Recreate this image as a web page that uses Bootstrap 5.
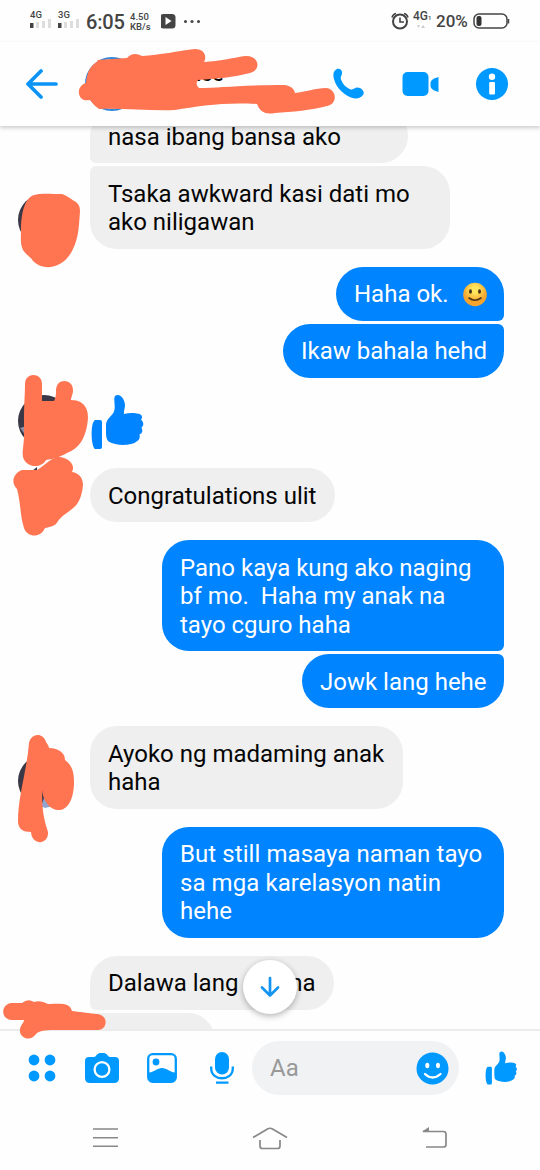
<!DOCTYPE html>
<html lang="tl">
<head>
<meta charset="utf-8">
<meta name="viewport" content="width=device-width, initial-scale=1">
<title>Chat</title>
<link href="https://cdn.jsdelivr.net/npm/bootstrap@5.3.0/dist/css/bootstrap.min.css" rel="stylesheet">
<style>
body{font-family:Roboto,"Liberation Sans",sans-serif;color:#050505;background:#fefefe}
.phone{width:540px;height:1170px}
svg{display:block;flex:none}
.statusbar{height:42px;padding:0 30px;color:#444;font-weight:500}
.sim{width:28px;font-size:9.5px;line-height:10px;padding-top:10px}
.sim svg{margin-top:-1px}
.clock{font-size:20px;line-height:44px;width:44px;letter-spacing:-.2px}
.rate{font-size:9.5px;line-height:9.5px;width:31px;padding-top:12px;font-weight:500}
.net{width:23px;margin-left:3px;padding-top:10px;font-size:12px;line-height:13px}
.net span{font-size:6px}
.level{font-size:17px;line-height:43px;width:36px}
.topbar{height:84px;z-index:2;background:#fefefe;box-shadow:0 2px 4px rgba(0,0,0,.2)}
.contact{width:202px;margin-left:26px}
.face{width:54px;height:54px;border:2px solid #2f87d8;background:#dce8f4}
.who{font-size:21px;font-weight:500;line-height:26px;padding-left:46px}
.seen{font-size:15.5px;line-height:20px;color:#777;padding-left:46px}
.chat{height:903px;padding:0 36px 0 90px}
.bubble{font-size:24px;line-height:28.5px;padding:13.75px 0 11.75px 18px;white-space:pre;border-radius:27px;flex:none}
.them{background:#efefef;align-self:flex-start}
.me{background:#0084ff;color:#fff;align-self:flex-end}
.tl{border-top-left-radius:6px}.bl{border-bottom-left-radius:6px}
.tr{border-top-right-radius:6px}.br{border-bottom-right-radius:6px}
.gap-l{margin-top:18px}.gap-s{margin-top:3px}
.jump{left:243px;top:834px;width:54px;height:54px;background:#fff;box-shadow:0 2px 6px rgba(0,0,0,.3)}
.composer{height:80px;padding-bottom:4px;border-top:2px solid #ebebeb;background:#fefefe;color:#0099ff}
.entry{width:207px;height:54px;margin-left:18px;padding:0 10px 0 18px;background:#f1f2f4;font-size:24px;color:#999}
.navkeys{height:61px;padding:0 92px 3px}
</style>
</head>
<body>
<div class="phone position-relative overflow-hidden d-flex flex-column">

<div class="statusbar d-flex flex-shrink-0">
  <div class="sim">4G
    <svg width="22" height="10" viewBox="0 0 22 10"><path fill="#444" d="M0 4h3.500v5H0z"/><path fill="#ddd" d="M6 3h3v6H6zM12 2h3v7h-3zM18 0h3v9h-3z"/></svg>
  </div>
  <div class="sim">3G
    <svg width="22" height="10" viewBox="0 0 22 10"><path fill="#444" d="M0 4h3.500v5H0z"/><path fill="#ddd" d="M6 3h3v6H6zM12 2h3v7h-3zM18 0h3v9h-3z"/></svg>
  </div>
  <div class="clock">6:05</div>
  <div class="rate">4.50<br>KB/s</div>
  <svg width="42" height="42" viewBox="0 0 42 42"><rect x="-1" y="14" width="15.500" height="14.500" rx="3.500" fill="#444"/><path d="M4.500 17v8l6-4z" fill="#fff"/><g fill="#444"><circle cx="24.500" cy="21.500" r="1.500"/><circle cx="31" cy="21.500" r="1.500"/><circle cx="37.500" cy="21.500" r="1.500"/></g></svg>
  <svg class="ms-auto" width="20" height="42" viewBox="0 0 20 42" fill="none" stroke="#444" stroke-width="2"><circle cx="10" cy="21.500" r="7"/><path d="M10 17.500V22h4M2 17.500q1-3.500 4-4M18 17.500q-1-3.500-4-4" stroke-width="1.600"/></svg>
  <div class="net d-flex flex-column">
    <div>4G<span>1</span></div>
    <svg width="20" height="6" viewBox="0 0 20 6"><path fill="#ccc" d="M4 1h3L5.500 4zM8 4h4L10 1z"/></svg>
  </div>
  <div class="level">20%</div>
  <svg width="38" height="42" viewBox="0 0 38 42"><rect x="2" y="14" width="33" height="14" rx="5" fill="none" stroke="#444" stroke-width="1.500"/><rect x="4.500" y="16" width="5" height="10" rx="2" fill="#333"/><path d="M36.500 19v4.500" stroke="#444" stroke-width="1.500"/></svg>
</div>

<header class="topbar position-relative d-flex align-items-center flex-shrink-0">
  <svg style="margin-left:26px" width="33" height="32" viewBox="0 0 33 32" fill="none" stroke="#0b93f6" stroke-width="3.700" stroke-linecap="round" stroke-linejoin="round"><path d="M30 16H2M15 3L2 16l13 13"/></svg>
  <div class="contact d-flex align-items-center">
    <div class="face rounded-circle flex-shrink-0"></div>
    <div class="text-nowrap" style="margin-left:11px">
      <div class="who">ice</div>
      <div class="seen">seconds</div>
    </div>
  </div>
  <svg style="margin-left:45px" width="34" height="34" viewBox="0 0 34 34"><path fill="#0099ff" d="M3 3.500C5.500.500 9.500 2 10 5c.500 3-2 4.500-1 7.500 2 5 5 8 9.500 10 3 .500 4-2 7-2 4 0 8 4.500 5.500 7.500-2.500 3-6.500 4.500-12 2.500C10 27 3 19 1.500 10 1.200 7 1.500 5 3 3.500z"/></svg>
  <svg style="margin-left:36px" width="38" height="26" viewBox="0 0 38 26" fill="#0099ff"><rect x=".5" y="1" width="26" height="24" rx="5"/><path d="M28.500 12c0-3 4-5 8-6v15c-4-1-8-3-8-6z"/></svg>
  <svg style="margin-left:36px" width="32" height="32" viewBox="0 0 32 32"><circle cx="16" cy="16" r="16" fill="#0099ff"/><circle cx="16" cy="8.700" r="3.200" fill="#fff"/><rect x="13.200" y="14" width="5.800" height="12.500" rx="1" fill="#fff"/></svg>
</header>

<main class="chat position-relative d-flex flex-column overflow-hidden flex-shrink-0">
  <div class="bubble them bl" style="width:318px;margin-top:-17px">nasa ibang bansa ako</div>
  <div class="bubble them tl gap-s" style="width:360px">Tsaka awkward kasi dati mo
ako niligawan</div>
  <div class="bubble me br gap-l d-flex" style="width:168px"><span>Haha ok.</span><svg style="margin:2px 0 0 13px" width="26" height="25" viewBox="0 0 26 25"><defs><radialGradient id="sun" cx=".5" cy=".3"><stop offset=".3" stop-color="#ffe45c"/><stop offset="1" stop-color="#f7a42c"/></radialGradient></defs><circle cx="13" cy="12.500" r="11.800" fill="url(#sun)"/><ellipse cx="8.500" cy="9.500" rx="1.500" ry="2.300" fill="#4d3516"/><ellipse cx="17.500" cy="9.500" rx="1.500" ry="2.300" fill="#4d3516"/><path d="M7 16q6 4.500 12 0" fill="none" stroke="#4d3516" stroke-width="1.600" stroke-linecap="round"/></svg></div>
  <div class="bubble me tr gap-s" style="width:221px">Ikaw bahala hehd</div>
  <svg style="margin:16.500px 0 18px" width="54" height="56" viewBox="0 0 54 56" fill="#0084ff"><use href="#thumb"/></svg>
  <div class="bubble them" style="width:245px">Congratulations ulit</div>
  <div class="bubble me br gap-l" style="width:342px">Pano kaya kung ako naging
bf mo.  Haha my anak na
tayo cguro haha</div>
  <div class="bubble me tr gap-s" style="width:202px">Jowk lang hehe</div>
  <div class="bubble them gap-l" style="width:313px">Ayoko ng madaming anak
haha</div>
  <div class="bubble me gap-l" style="width:342px;letter-spacing:.07px">But still masaya naman tayo
sa mga karelasyon natin
hehe</div>
  <div class="bubble them bl gap-l" style="width:244px">Dalawa lang ako na</div>
  <div class="bubble them tl gap-s" style="width:125px"> </div>
  <button class="jump position-absolute rounded-circle border-0 p-0 d-flex align-items-center justify-content-center" aria-label="Down">
    <svg width="20" height="22" viewBox="0 0 20 22" fill="none" stroke="#1595f2" stroke-width="2.700" stroke-linecap="round" stroke-linejoin="round"><path d="M10 2v17.500M2 11.500l8 8 8-8"/></svg>
  </button>
</main>

<footer class="composer d-flex align-items-center flex-shrink-0">
  <svg style="margin-left:28px" width="28" height="28" viewBox="0 0 28 28" fill="currentColor"><circle cx="6" cy="6" r="5.400"/><circle cx="22" cy="6" r="5.400"/><circle cx="6" cy="22" r="5.400"/><circle cx="22" cy="22" r="5.400"/></svg>
  <svg style="margin-left:29px" width="34" height="30" viewBox="0 0 34 30"><path fill="currentColor" d="M4 4h5c2 0 3-4 6-4h4c3 0 4 4 6 4h5q4 0 4 4v17q0 5-5 5H5q-5 0-5-5V8q0-4 4-4z"/><circle cx="17" cy="16.500" r="7.400" fill="none" stroke="#fff" stroke-width="2.300"/></svg>
  <svg style="margin-left:28px" width="30" height="30" viewBox="0 0 30 30"><rect x="1.200" y="1.200" width="27.600" height="27.600" rx="4.500" fill="none" stroke="currentColor" stroke-width="2.300"/><circle cx="9" cy="9" r="3.400" fill="currentColor"/><path fill="currentColor" d="M2 19.500c6-.5 8-4.500 13-4.500s7 4 13 4.500V25q0 4-4 4H6q-4 0-4-4z"/></svg>
  <svg style="margin-left:33px" width="24" height="34" viewBox="0 0 24 34" fill="none" stroke="currentColor" stroke-width="2.300"><rect x="5" y="1" width="14" height="22.500" rx="7" fill="currentColor" stroke="none"/><path d="M1.200 15.500v2c0 13 21.600 13 21.600 0v-2M6 31.700h12.500"/></svg>
  <div class="entry rounded-pill d-flex align-items-center justify-content-between"><span>Aa</span>
    <svg width="33" height="33" viewBox="0 0 33 33"><circle cx="16.500" cy="16.500" r="16" fill="#0099ff"/><ellipse cx="11.300" cy="13.500" rx="2" ry="2.800" fill="#fff"/><ellipse cx="22" cy="13.500" rx="2" ry="2.800" fill="#fff"/><path d="M9 22q7.500 7 15.500 0" fill="none" stroke="#fff" stroke-width="2.300" stroke-linecap="round"/></svg>
  </div>
  <svg style="margin-left:25px" width="34" height="34" viewBox="0 0 54 56" fill="currentColor"><g id="thumb"><path d="M5 26h5q2 0 2 2v25q0 2-2 2H5c-4-2-5-26 0-29z"/><path d="M25 2c5-4 10 4 10 9 0 4-1.500 6-1 9 6-1.500 13-1 16.500.5 2 1 2 4 .5 5 3 3 3 6 .5 8 1.500 4 1 5.500-2 7 1 4-1 6-3 7-4 4-20 5-28 0-2-2-2.500-5-2.500-9v-7c0-7 6-9 8-14 2-6-1-12 1-15.500z"/></g></svg>
</footer>

<nav class="navkeys d-flex align-items-center justify-content-between flex-shrink-0" aria-label="System">
  <svg width="27" height="22" viewBox="0 0 27 22" stroke="#888" stroke-width="1.600"><path d="M1 2h25M1 10.700h25M1 19.300h25"/></svg>
  <svg width="38" height="24" viewBox="0 0 38 24" fill="none" stroke="#888" stroke-width="1.700"><path d="M2 11.500L16.500 3q2.500-1.500 5 0L36 11.500M9 14v6q0 2.500 2.500 2.500h15q2.500 0 2.500-2.500v-6"/></svg>
  <svg width="27" height="22" viewBox="0 0 27 22" fill="none" stroke="#888" stroke-width="1.700"><path d="M2 4.500h20.500q2.500 0 2.500 2.500v10.500q0 2.500-2.500 2.500H5"/><path d="M1 4.500L8 0v4.500z" fill="#888" stroke="none"/></svg>
</nav>

<!-- marker strokes hiding the contact's name and face -->
<svg class="position-absolute top-0 start-0 pe-none" style="z-index:3" width="540" height="1170" viewBox="0 0 540 1170">
  <g fill="#3a3846"><circle cx="44" cy="220" r="26"/><circle cx="44" cy="421" r="26"/><path d="M32 471l5-4v5zM19 497l4 12V497zM58 516h4v-6h-6z"/><circle cx="44" cy="781" r="26"/></g>
  <path d="M44 798l9 8-8 2-4-2z" fill="#8fa3d0"/><path d="M20 428l6 8v-10z" fill="#8d8ea6"/>
  <g fill="#ff7451">
    <path d="M97 60c10-1 20-1 30-2q6-7 15-2c18-1 36-5 53-7 10 0 12 8 9 13 16-1 28-4 41-6 14-1 17 14 5 17-16 4-34 6-52 7-2 3-2 5 1 8 20 0 40-3 86-3 5 1 9 3 10 8 10-1 21-5 31-5 11 1 12 16 1 18-16 4-35 6-52 7q-14 3-18-9c-32-2-59 2-82 6-25 1-51-2-76-1q-5-3-9-9c-13 3-15-14-4-17 1-11 4-17 12-22z"/>
    <path d="M34 195c7-2 17-1 28-1 6 2 10 6 14 8q4 3 4 9c-1 13-1 26-7 38-8 18-28 24-40 12-2-4-7-6-10-11-3-6-2-13-2-20 0-15 3-32 13-35z"/>
    <path d="M25 384c0-12 17-12 17 0v17h12c2-4 2-7 2-10 0-14 17-12 17-1 0 5-2 7-2 10 16 0 19 13 16 26-3 14-8 22-20 27-9 5-14 6-21 7-5 9-20 8-23-3-1-7 1-12 1-21V415c0-11 1-21 1-31z"/>
    <path d="M22 470h15c8-5 12-10 20-13 8-1 17 5 16 12l-1 3c7 1 11 6 11 13-1 12-5 20-11 24-5 4-11 7-16 15-4 3-7 3-11 4-5 11-18 9-21 0-4-12-3-24-7-39-7-7-3-16 5-19z"/>
    <path d="M29 743c2-10 14-11 17-1q3 4 3 6c8 0 16 4 16 12 7 5 9 12 9 22 0 15-5 27-14 28-9 1-17-8-18-20 0 17 1 27 6 42 1 13-16 14-17 0-8 0-13-3-13-11 0-25 9-51 11-78z"/>
    <path d="M11 1003h11q6-5 12-1 7-2 14 2c17-1 22 0 24 7l24 3c13 0 12 16 2 16H57c-8 0-18 0-21 4-6 9-17 3-16-4 0-5 4-7 4-10H12c-11 0-12-15-1-17z"/>
  </g>
</svg>
</div>
<script src="https://cdn.jsdelivr.net/npm/bootstrap@5.3.0/dist/js/bootstrap.bundle.min.js"></script>
</body>
</html>
